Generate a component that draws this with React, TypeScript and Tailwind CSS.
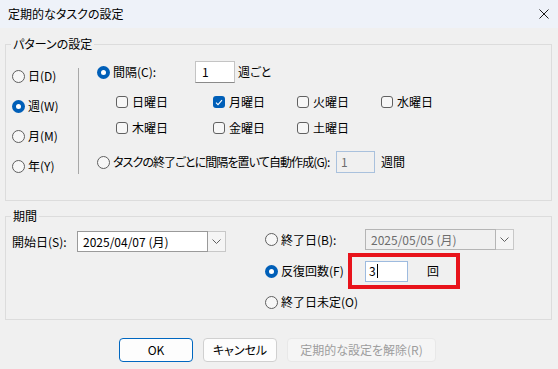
import React from "react";

const FONT = "[font-family:'Noto_Sans_CJK_JP','Noto_Sans',sans-serif] [font-feature-settings:'palt']";

function Radio({ checked }: { checked?: boolean }) {
  return checked ? (
    <span className="w-[13px] h-[13px] rounded-full bg-[#005fb8] flex items-center justify-center shrink-0">
      <span className="w-[5px] h-[5px] rounded-full bg-white" />
    </span>
  ) : (
    <span className="w-[13px] h-[13px] rounded-full border border-[#5f5f5f] bg-[#f7f7f7] shrink-0" />
  );
}

function Check({ checked }: { checked?: boolean }) {
  return checked ? (
    <span className="w-[12px] h-[12px] rounded-[3px] bg-[#005fb8] flex items-center justify-center shrink-0">
      <svg width="8" height="7" viewBox="0 0 8 7" fill="none">
        <path d="M1 3.6 L3 5.6 L7 1.2" stroke="white" strokeWidth="1.1" />
      </svg>
    </span>
  ) : (
    <span className="w-[12px] h-[12px] rounded-[3px] border border-[#616161] bg-[#f7f7f7] shrink-0" />
  );
}

function Chevron({ color = "#606060" }: { color?: string }) {
  return (
    <svg width="9" height="5" viewBox="0 0 9 5" fill="none">
      <path d="M0.5 0.5 L4.5 4.5 L8.5 0.5" stroke={color} strokeWidth="1" />
    </svg>
  );
}

function CheckItem({ label, checked }: { label: string; checked?: boolean }) {
  return (
    <div className="flex items-center gap-[4px] h-[20px]">
      <Check checked={checked} />
      <span>{label}</span>
    </div>
  );
}

export default function App() {
  return (
    <div className={`w-[558px] h-[369px] bg-[#f0f0f0] text-[12px] leading-[16px] text-[#000] ${FONT} overflow-hidden`}>
      {/* Title bar */}
      <div className="h-[28px] bg-[#eef2f9] flex items-center justify-between pl-[8px] pr-[9px]">
        <span>定期的なタスクの設定</span>
        <svg width="10" height="10" viewBox="0 0 10 10" fill="none">
          <path d="M0.5 0.5 L9.5 9.5 M9.5 0.5 L0.5 9.5" stroke="#1a1a1a" strokeWidth="1" />
        </svg>
      </div>

      <div className="px-[5px]">
        {/* Pattern group */}
        <fieldset className="mt-[8px] h-[165px] border border-[#dcdcdc] pl-[6px] pr-[6px] min-w-0 w-[547px]">
          <legend className="px-[2px] -ml-[1px] leading-[16px]">パターンの設定</legend>
          <div className="flex">
            <div className="flex flex-col mt-[9px] w-[66px]">
              {[
                ["日(D)", false],
                ["週(W)", true],
                ["月(M)", false],
                ["年(Y)", false],
              ].map(([l, c]) => (
                <div key={l as string} className="h-[30px] flex items-center gap-[3px]">
                  <Radio checked={c as boolean} />
                  <span>{l as string}</span>
                </div>
              ))}
            </div>
            <div className="w-px h-[106px] mt-[16px] bg-[#a8a8a8]" />
            <div className="flex flex-col ml-[18px]">
              <div className="flex items-center h-[22px] mt-[9px]">
                <Radio checked />
                <span className="ml-[3px] w-[82px]">間隔(C):</span>
                <div className="w-[40px] h-[22px] bg-white border border-[#c4c4c4] border-b-[#8a8a8a] flex items-center pl-[6px]">1</div>
                <span className="ml-[3px]">週ごと</span>
              </div>
              <div className="grid grid-cols-[97px_84px_84px_84px] ml-[19px] mt-[9px] gap-y-[6px]">
                <CheckItem label="日曜日" />
                <CheckItem label="月曜日" checked />
                <CheckItem label="火曜日" />
                <CheckItem label="水曜日" />
                <CheckItem label="木曜日" />
                <CheckItem label="金曜日" />
                <CheckItem label="土曜日" />
              </div>
              <div className="flex items-center h-[22px] mt-[13px]">
                <Radio />
                <span className="ml-[3px] w-[223px] whitespace-nowrap tracking-[-0.9px]">タスクの終了ごとに間隔を置いて自動作成(G):</span>
                <div className="w-[39px] h-[22px] bg-[#f0f0f0] border border-[#a9c1dd] flex items-center pl-[4px] text-[#6d6d6d]">1</div>
                <span className="ml-[6px]">週間</span>
              </div>
            </div>
          </div>
        </fieldset>

        {/* Range group */}
        <fieldset className="mt-[7px] h-[112px] border border-[#dcdcdc] pl-[6px] min-w-0 w-[547px]">
          <legend className="px-[2px] -ml-[1px] leading-[16px]">期間</legend>
          <div className="flex">
            <div className="flex items-center mt-[7px] h-[21px] w-[253px] shrink-0">
              <span className="w-[65px]">開始日(S):</span>
              <div className="w-[131px] h-[21px] bg-white border border-[#9a9a9a] flex items-center pl-[5px] whitespace-nowrap">2025/04/07 (月)</div>
              <div className="w-[18px] h-[21px] bg-[#f5f5f5] border border-l-0 border-[#c8c8c8] flex items-center justify-center">
                <Chevron />
              </div>
            </div>
            <div className="flex flex-col mt-[5px]">
              <div className="flex items-center h-[21px]">
                <Radio />
                <span className="ml-[3px] w-[84px]">終了日(B):</span>
                <div className="w-[131px] h-[21px] bg-[#f0f0f0] border border-[#b5b5b5] flex items-center pl-[5px] text-[#6d6d6d] whitespace-nowrap">2025/05/05 (月)</div>
                <div className="w-[18px] h-[21px] bg-[#f5f5f5] border border-l-0 border-[#c8c8c8] flex items-center justify-center">
                  <Chevron />
                </div>
              </div>
              <div className="flex items-center h-[36px] mt-[3px]">
                <Radio checked />
                <span className="ml-[3px] w-[67px]">反復回数(F)</span>
                <div className="w-[112px] h-[36px] border-4 border-[#e8131b] flex items-center pl-[13px]">
                  <div className="w-[43px] h-[21px] bg-white border border-[#9ebbdf] flex items-center pl-[3px]">
                    <span>3</span>
                    <span className="w-px h-[14px] bg-black ml-[1px]" />
                  </div>
                  <span className="ml-[19px]">回</span>
                </div>
              </div>
              <div className="flex items-center h-[16px] mt-[5px]">
                <Radio />
                <span className="ml-[3px]">終了日未定(O)</span>
              </div>
            </div>
          </div>
        </fieldset>
      </div>

      {/* Buttons */}
      <div className="flex justify-center gap-[10px] mt-[18px] pr-[3px]">
        <div className="w-[74px] h-[24px] rounded-[4px] bg-[#fdfdfd] border border-[#0067c0] flex items-center justify-center">OK</div>
        <div className="w-[74px] h-[24px] rounded-[4px] bg-[#fdfdfd] border border-[#d0d0d0] flex items-center justify-center">キャンセル</div>
        <div className="w-[149px] h-[24px] rounded-[4px] bg-[#f5f5f5] border border-[#e8e8e8] flex items-center justify-center text-[#9d9d9d]">定期的な設定を解除(R)</div>
      </div>
    </div>
  );
}
